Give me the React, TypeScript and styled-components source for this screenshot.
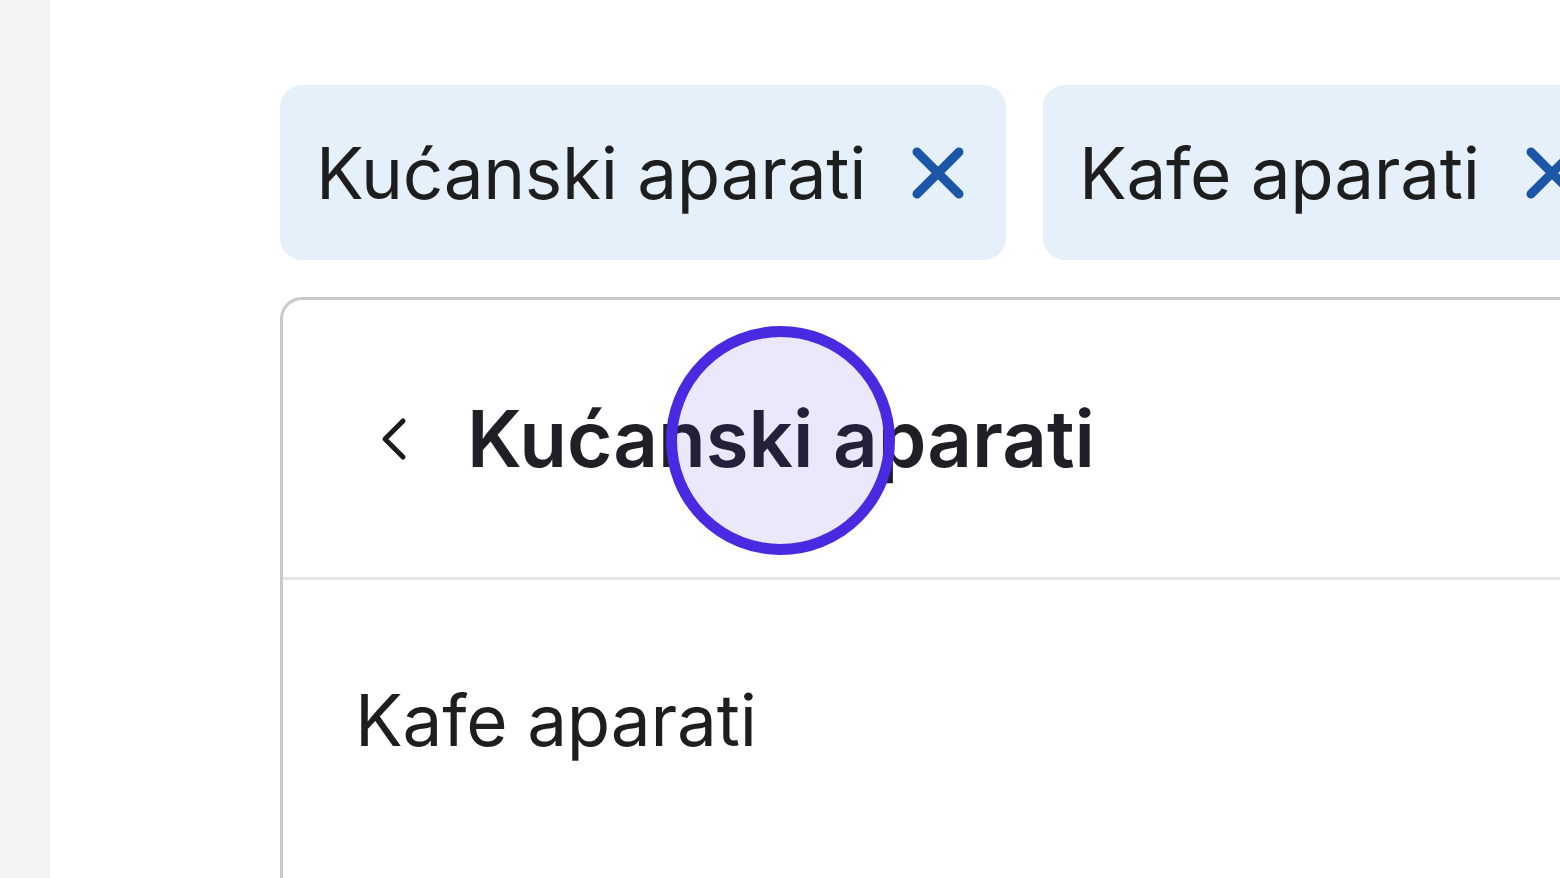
import styled, { createGlobalStyle } from "styled-components";

const GlobalStyle = createGlobalStyle`
  html, body {
    margin: 0;
    padding: 0;
    height: 100%;
    overflow: hidden;
    background: #ffffff;
    font-family: Inter, "Noto Sans", sans-serif;
  }
`

const Page = styled.div`
  position: relative;
  display: flex;
  width: 1560px;
  height: 878px;
  overflow: hidden;
`

const SideStrip = styled.div`
  flex: 0 0 50px;
  background: #f3f4f6;
`

const Main = styled.div`
  flex: 1;
  padding: 85px 0 0 230px;
  display: flex;
  flex-direction: column;
  gap: 37px;
  min-width: 0;
`

const ChipRow = styled.div`
  display: flex;
  gap: 37px;
`

const Chip = styled.div`
  flex: 0 0 auto;
  height: 175px;
  display: flex;
  align-items: center;
  gap: 46px;
  padding: 0 42px 0 36px;
  background: #e6f0fb;
  border-radius: 22px;
  box-sizing: border-box;
`

const ChipLabel = styled.span`
  font-size: 71px;
  font-weight: 400;
  color: #1e1e1e;
  letter-spacing: -0.3px;
`

const Panel = styled.div`
  width: 1600px;
  height: 900px;
  flex: 0 0 auto;
  border: 3px solid #c9c9c9;
  border-radius: 22px;
  box-sizing: border-box;
  background: #ffffff;
`

const PanelHeader = styled.div`
  height: 277px;
  display: flex;
  align-items: center;
  gap: 58px;
  padding-left: 96px;
  border-bottom: 3px solid #e6e6e6;
`

const PanelTitle = styled.span`
  font-size: 78px;
  font-weight: 600;
  color: #1f1f26;
  letter-spacing: 0;
`

const Item = styled.div`
  height: 280px;
  display: flex;
  align-items: center;
  padding-left: 72px;
  padding-bottom: 2px;
  font-size: 71px;
  color: #1e1e1e;
  letter-spacing: -0.2px;
`

const TouchDot = styled.div`
  position: absolute;
  left: 666px;
  top: 326px;
  width: 229px;
  height: 229px;
  border: 11px solid #4a2ae0;
  border-radius: 50%;
  box-sizing: border-box;
  background: rgba(74, 42, 224, 0.11);
  pointer-events: none;
`

const CloseIcon = () => (
  <svg width="52" height="52" viewBox="0 0 52 52" fill="none">
    <path d="M5 5 L47 47 M47 5 L5 47" stroke="#1c56a6" strokeWidth="9" strokeLinecap="round" />
  </svg>
)

const BackIcon = () => (
  <svg width="30" height="44" viewBox="0 0 30 44" fill="none">
    <path d="M24 4 L6 22 L24 40" stroke="#1a1a1a" strokeWidth="5" strokeLinecap="round" strokeLinejoin="round" />
  </svg>
)

const chips = ["Kućanski aparati", "Kafe aparati"]

export default function App() {
  return (
    <>
      <GlobalStyle />
      <Page>
        <SideStrip />
        <Main>
          <ChipRow>
            {chips.map((c) => (
              <Chip key={c}>
                <ChipLabel>{c}</ChipLabel>
                <CloseIcon />
              </Chip>
            ))}
          </ChipRow>
          <Panel>
            <PanelHeader>
              <BackIcon />
              <PanelTitle>Kućanski aparati</PanelTitle>
            </PanelHeader>
            <Item>Kafe aparati</Item>
          </Panel>
        </Main>
        <TouchDot />
      </Page>
    </>
  )
}
